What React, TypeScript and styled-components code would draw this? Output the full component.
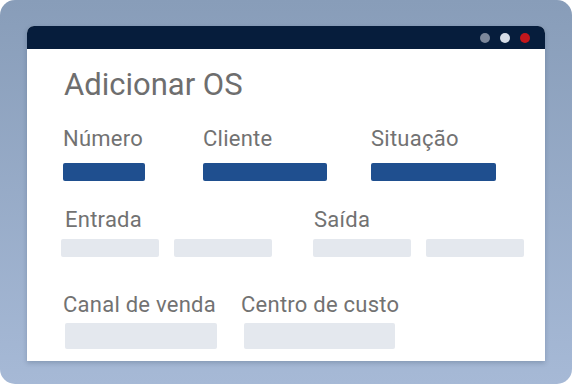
import React from 'react';
import styled, { createGlobalStyle } from 'styled-components';

const GlobalStyle = createGlobalStyle`
  html, body {
    margin: 0;
    padding: 0;
    background: #ffffff;
  }
  body {
    font-family: Roboto, "Liberation Sans", sans-serif;
  }
`;

const Frame = styled.div`
  width: 572px;
  height: 384px;
  border-radius: 15px;
  background: linear-gradient(180deg, #889db9 0%, #a6b9d6 100%);
  padding: 26px 0 0 27px;
  box-sizing: border-box;
`;

const Window = styled.div`
  width: 518px;
  height: 335px;
  background: #ffffff;
  border-radius: 7px 7px 0 0;
  box-shadow: 0 2px 5px rgba(20, 40, 70, 0.22);
  overflow: hidden;
  display: flex;
  flex-direction: column;
`;

const TitleBar = styled.div`
  height: 23px;
  background: #061d3c;
  display: flex;
  align-items: center;
  justify-content: flex-end;
  gap: 10px;
  padding-right: 15px;
`;

const Dot = styled.span<{ $color: string }>`
  width: 10px;
  height: 10px;
  border-radius: 50%;
  background: ${(p) => p.$color};
`;

const Body = styled.div`
  padding: 18px 0 0 36px;
  display: flex;
  flex-direction: column;
`;

const Title = styled.h1`
  margin: 0 0 23px 1px;
  font-size: 31px;
  line-height: 36px;
  font-weight: 400;
  color: #6e6e6e;
`;

const Row = styled.div<{ $top?: number }>`
  display: flex;
  align-items: flex-start;
  margin-top: ${(p) => p.$top ?? 0}px;
`;

const Group = styled.div<{ $left?: number; $shift?: number }>`
  display: flex;
  flex-direction: column;
  margin-left: ${(p) => p.$left ?? 0}px;
  transform: translateX(${(p) => p.$shift ?? 0}px);
`;

const Label = styled.div<{ $indent?: number; $gap: number }>`
  font-size: 22px;
  line-height: 26px;
  letter-spacing: 0.25px;
  color: #727272;
  margin-left: ${(p) => p.$indent ?? 0}px;
  margin-bottom: ${(p) => p.$gap}px;
  white-space: nowrap;
`;

const Bars = styled.div`
  display: flex;
  gap: 15px;
`;

const Bar = styled.div<{ $w: number; $h: number; $filled?: boolean; $indent?: number }>`
  width: ${(p) => p.$w}px;
  height: ${(p) => p.$h}px;
  margin-left: ${(p) => p.$indent ?? 0}px;
  border-radius: 2px;
  background: ${(p) => (p.$filled ? '#1f4f8f' : '#e4e8ee')};
`;

const App: React.FC = () => {
  return (
    <>
      <GlobalStyle />
      <Frame>
        <Window>
          <TitleBar>
            <Dot $color="#7c889b" />
            <Dot $color="#d6dde7" />
            <Dot $color="#c3171c" />
          </TitleBar>
          <Body>
            <Title>Adicionar OS</Title>

            <Row>
              <Group>
                <Label $gap={11}>Número</Label>
                <Bar $w={82} $h={18} $filled />
              </Group>
              <Group $left={58}>
                <Label $gap={11}>Cliente</Label>
                <Bar $w={124} $h={18} $filled />
              </Group>
              <Group $left={44}>
                <Label $gap={11}>Situação</Label>
                <Bar $w={125} $h={18} $filled />
              </Group>
            </Row>

            <Row $top={26}>
              <Group $shift={-2}>
                <Label $indent={4} $gap={6}>Entrada</Label>
                <Bars>
                  <Bar $w={98} $h={18} />
                  <Bar $w={98} $h={18} />
                </Bars>
              </Group>
              <Group $left={39}>
                <Label $indent={1} $gap={6}>Saída</Label>
                <Bars>
                  <Bar $w={98} $h={18} />
                  <Bar $w={98} $h={18} />
                </Bars>
              </Group>
            </Row>

            <Row $top={35}>
              <Group>
                <Label $gap={5}>Canal de venda</Label>
                <Bar $w={152} $h={26} $indent={2} />
              </Group>
              <Group $left={24}>
                <Label $gap={5}>Centro de custo</Label>
                <Bar $w={151} $h={26} $indent={3} />
              </Group>
            </Row>
          </Body>
        </Window>
      </Frame>
    </>
  );
};

export default App;
